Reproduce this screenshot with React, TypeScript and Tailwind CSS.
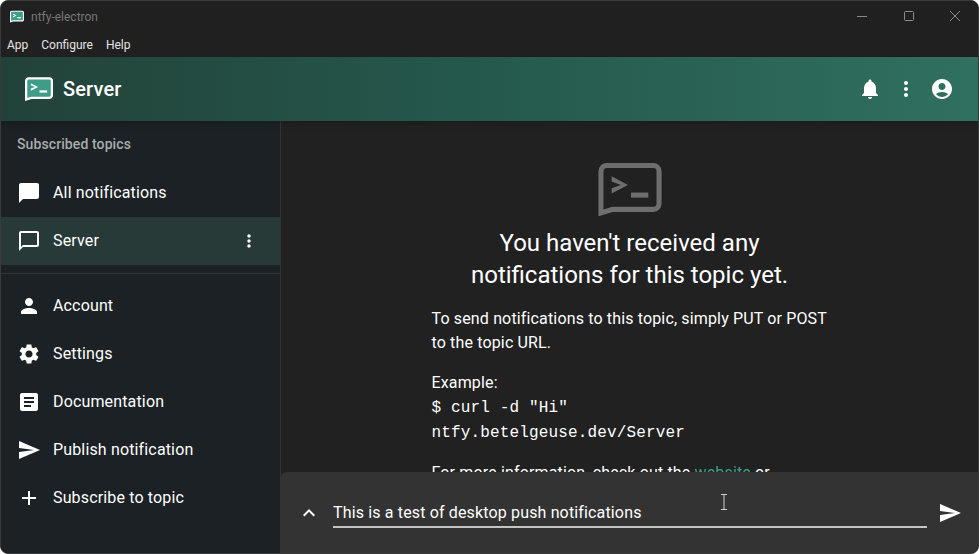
import React from 'react';

const ICONS = {
  chat: 'M20 2H4c-1.1 0-2 .9-2 2v18l4-4h14c1.1 0 2-.9 2-2V4c0-1.1-.9-2-2-2z',
  chatOutline: 'M20 2H4c-1.1 0-2 .9-2 2v18l4-4h14c1.1 0 2-.9 2-2V4c0-1.1-.9-2-2-2zm0 14H6l-2 2V4h16v12z',
  person: 'M12 12c2.21 0 4-1.79 4-4s-1.79-4-4-4-4 1.79-4 4 1.79 4 4 4zm0 2c-2.67 0-8 1.34-8 4v2h16v-2c0-2.66-5.33-4-8-4z',
  settings:
    'M19.14 12.94c.04-.3.06-.61.06-.94 0-.32-.02-.64-.07-.94l2.03-1.58c.18-.14.23-.41.12-.61l-1.92-3.32c-.12-.22-.37-.29-.59-.22l-2.39.96c-.5-.38-1.03-.7-1.62-.94l-.36-2.54c-.04-.24-.24-.41-.48-.41h-3.84c-.24 0-.43.17-.47.41l-.36 2.54c-.59.24-1.13.57-1.62.94l-2.39-.96c-.22-.08-.47 0-.59.22L2.74 8.87c-.12.21-.08.47.12.61l2.03 1.58c-.05.3-.09.63-.09.94s.02.64.07.94l-2.03 1.58c-.18.14-.23.41-.12.61l1.92 3.32c.12.22.37.29.59.22l2.39-.96c.5.38 1.03.7 1.62.94l.36 2.54c.05.24.24.41.48.41h3.84c.24 0 .44-.17.47-.41l.36-2.54c.59-.24 1.13-.56 1.62-.94l2.39.96c.22.08.47 0 .59-.22l1.92-3.32c.12-.22.07-.47-.12-.61l-2.01-1.58zM12 15.6c-1.98 0-3.6-1.62-3.6-3.6s1.62-3.6 3.6-3.6 3.6 1.62 3.6 3.6-1.62 3.6-3.6 3.6z',
  article: 'M19 3H5c-1.1 0-2 .9-2 2v14c0 1.1.9 2 2 2h14c1.1 0 2-.9 2-2V5c0-1.1-.9-2-2-2zm-5 14H7v-2h7v2zm3-4H7v-2h10v2zm0-4H7V7h10v2z',
  send: 'M2.01 21 23 12 2.01 3 2 10l15 2-15 2z',
  add: 'M19 13h-6v6h-2v-6H5v-2h6V5h2v6h6v2z',
  bell: 'M12 22c1.1 0 2-.9 2-2h-4c0 1.1.89 2 2 2zm6-6v-5c0-3.07-1.64-5.64-4.5-6.32V4c0-.83-.67-1.5-1.5-1.5s-1.5.67-1.5 1.5v.68C7.63 5.36 6 7.92 6 11v5l-2 2v1h16v-1l-2-2z',
  more: 'M12 8c1.1 0 2-.9 2-2s-.9-2-2-2-2 .9-2 2 .9 2 2 2zm0 2c-1.1 0-2 .9-2 2s.9 2 2 2 2-.9 2-2-.9-2-2-2zm0 6c-1.1 0-2 .9-2 2s.9 2 2 2 2-.9 2-2-.9-2-2-2z',
  account:
    'M12 2C6.48 2 2 6.48 2 12s4.48 10 10 10 10-4.48 10-10S17.52 2 12 2zm0 4c1.93 0 3.5 1.57 3.5 3.5S13.93 13 12 13s-3.5-1.57-3.5-3.5S10.07 6 12 6zm0 14c-2.03 0-4.43-.82-6.14-2.88C7.55 15.8 9.68 15 12 15s4.45.8 6.14 2.12C16.43 19.18 14.03 20 12 20z',
  up: 'M7.41 15.41 12 10.83l4.59 4.58L18 14l-6-6-6 6z',
};

const Icon = ({ name, className = 'w-6 h-6' }: { name: keyof typeof ICONS; className?: string }) => (
  <svg viewBox="0 0 24 24" fill="currentColor" className={className}>
    <path d={ICONS[name]} />
  </svg>
);

// ntfy bubble: outline, terminal chevron and underscore
const Logo = ({ className, fill, stroke }: { className: string; fill: string; stroke: string }) => (
  <svg viewBox="0 0 62 52" className={className}>
    <path
      d="M8 2.5h46a5.5 5.5 0 0 1 5.5 5.5v32a5.5 5.5 0 0 1-5.5 5.5H14L2.5 49V8A5.5 5.5 0 0 1 8 2.5z"
      fill={fill}
      stroke={stroke}
      strokeWidth="5"
    />
    <path d="M13 13l16 8.5-16 8.5v-5.2l9-3.3-9-3.3z" fill={stroke} />
    <rect x="32" y="29" width="17" height="5" fill={stroke} />
  </svg>
);

const NavItem = ({ icon, label, selected }: { icon: keyof typeof ICONS; label: string; selected?: boolean }) => (
  <div className={`flex items-center h-12 pl-4 pr-[21px] ${selected ? 'bg-[#283a38]' : ''}`}>
    <div className="w-9 text-white">
      <Icon name={icon} />
    </div>
    <span className="flex-1 text-white text-base tracking-[0.00938em]">{label}</span>
    {selected && <Icon name="more" className="w-5 h-5 text-white" />}
  </div>
);

export default function App() {
  return (
    <div
      className="w-[979px] h-[554px] flex flex-col overflow-hidden bg-[#202020] border border-[#3a3a3a] rounded-lg"
      style={{ fontFamily: 'Roboto, sans-serif' }}
    >
      {/* title bar */}
      <div className="h-[31px] shrink-0 flex items-center pl-[9px] bg-[#202020]">
        <Logo className="w-[14px] h-[13px]" fill="#3d9d87" stroke="#ffffff" />
        <span className="ml-[7px] text-xs text-[#767676]">ntfy-electron</span>
        <div className="ml-auto flex items-center text-[#8a8a8a]">
          <svg viewBox="0 0 46 32" className="w-[46px] h-8" fill="none" stroke="currentColor">
            <path d="M18 15.5h10" />
          </svg>
          <svg viewBox="0 0 46 32" className="w-[46px] h-8 ml-[1px]" fill="none" stroke="currentColor">
            <rect x="18.5" y="10.5" width="9" height="9" rx="1" />
          </svg>
          <svg viewBox="0 0 46 32" className="w-[46px] h-8" fill="none" stroke="currentColor">
            <path d="M18 10l10 10M28 10L18 20" />
          </svg>
        </div>
      </div>

      {/* menu bar */}
      <div className="h-[25px] shrink-0 flex items-center pl-[6px] gap-[13px] text-xs text-[#e4e4e4]">
        <span>App</span>
        <span>Configure</span>
        <span>Help</span>
      </div>

      {/* app bar */}
      <header className="h-16 shrink-0 flex items-center pl-6 pr-6 bg-gradient-to-r from-[#224239] via-[#25594d] to-[#307060] shadow-md z-10">
        <Logo className="w-7 h-6" fill="#3d9d87" stroke="#ffffff" />
        <span className="ml-[10px] text-white text-xl font-medium tracking-[0.0075em]">Server</span>
        <div className="ml-auto flex items-center gap-3 text-white">
          <Icon name="bell" />
          <Icon name="more" />
          <Icon name="account" />
        </div>
      </header>

      <div className="flex-1 flex min-h-0">
        {/* sidebar */}
        <aside className="w-[280px] shrink-0 bg-[#1b2124] border-r border-[#333333]">
          <div className="h-[48px] flex items-center pl-4 pb-[2px] text-sm font-medium text-[#a9abac] tracking-[0.00714em]">
            Subscribed topics
          </div>
          <NavItem icon="chat" label="All notifications" />
          <NavItem icon="chatOutline" label="Server" selected />
          <div className="my-2 border-t border-[#333638]" />
          <NavItem icon="person" label="Account" />
          <NavItem icon="settings" label="Settings" />
          <NavItem icon="article" label="Documentation" />
          <NavItem icon="send" label="Publish notification" />
          <NavItem icon="add" label="Subscribe to topic" />
        </aside>

        {/* main */}
        <main className="flex-1 min-w-0 flex flex-col bg-[#212121]">
          <div className="flex-1 min-h-0 overflow-hidden flex flex-col items-center pt-[42px]">
            <Logo className="w-[64px] h-[53px] shrink-0" fill="none" stroke="#6e6e6e" />
            <div className="mt-[11px] shrink-0 text-center text-white text-2xl leading-8">
              You haven't received any
              <br />
              notifications for this topic yet.
            </div>
            <div className="mt-[16px] shrink-0 w-[396px] text-base leading-6 text-white tracking-[0.00938em]">
              <p>To send notifications to this topic, simply PUT or POST to the topic URL.</p>
              <p className="mt-4">Example:</p>
              <div className="mt-[1px] leading-[25px]" style={{ fontFamily: '"Liberation Mono", monospace' }}>
                $ curl -d "Hi"
                <br />
                ntfy.betelgeuse.dev/Server
              </div>
              <p className="mt-[15px]">
                For more information, check out the <span className="text-[#3d9d87]">website</span> or
              </p>
            </div>
          </div>

          {/* composer */}
          <div className="relative h-[81px] shrink-0 flex items-center bg-[#333333] rounded-tl-md pl-4 pr-4">
            <Icon name="up" className="w-6 h-6 text-white" />
            <div className="ml-3 flex-1 h-[32px] mt-[-2px] pt-1 flex items-center border-b-2 border-[#c4c4c4] text-white text-base tracking-[0.00938em]">
              This is a test of desktop push notifications
            </div>
            <Icon name="send" className="ml-[11px] w-6 h-6 text-white" />
            {/* mouse cursor */}
            <svg viewBox="0 0 8 16" className="absolute left-[439px] top-[22px] w-2 h-4" fill="none" stroke="#d0d0d0">
              <path d="M1 .5h6M4 .5v15M1 15.5h6" />
            </svg>
          </div>
        </main>
      </div>
    </div>
  );
}
